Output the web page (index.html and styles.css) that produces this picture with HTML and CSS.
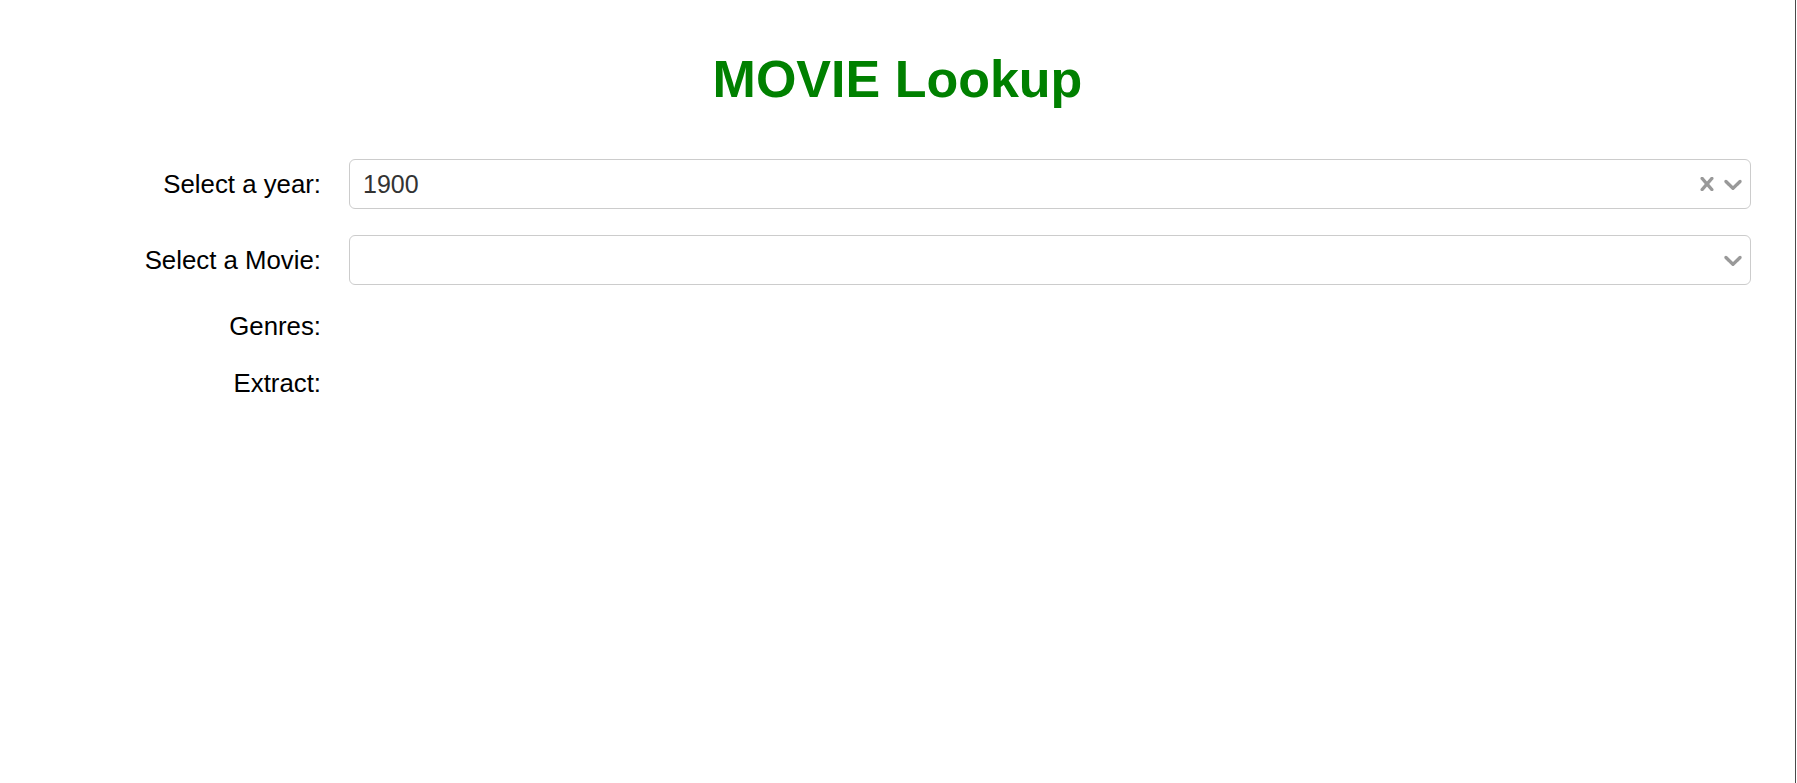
FILE: index.html
```html
<!DOCTYPE html>
<html lang="en">
<head>
<meta charset="utf-8">
<title>MOVIE Lookup</title>
<link rel="stylesheet" href="styles.css">
</head>
<body>
<div class="page">
  <h1 class="title">MOVIE Lookup</h1>
  <div class="form">
    <div class="label">Select a year:</div>
    <div class="select">
      <div class="value">1900</div>
      <div class="indicators">
        <svg class="icon-clear" viewBox="5 5 10 10" width="14" height="14" aria-hidden="true"><path d="M14.348 14.849c-0.469 0.469-1.229 0.469-1.697 0l-2.651-3.030-2.651 3.029c-0.469 0.469-1.229 0.469-1.697 0-0.469-0.469-0.469-1.229 0-1.697l2.758-3.15-2.759-3.152c-0.469-0.469-0.469-1.228 0-1.697s1.228-0.469 1.697 0l2.652 3.031 2.651-3.031c0.469-0.469 1.228-0.469 1.697 0s0.469 1.229 0 1.697l-2.758 3.152 2.758 3.15c0.469 0.469 0.469 1.229 0 1.698z"/></svg>
        <svg class="icon-chevron" viewBox="4 4 12 12" width="18" height="18" aria-hidden="true"><path d="M4.516 7.548c0.436-0.446 1.043-0.481 1.576 0l3.908 3.747 3.908-3.747c0.533-0.481 1.141-0.446 1.574 0 0.436 0.445 0.408 1.197 0 1.615-0.406 0.418-4.695 4.502-4.695 4.502-0.217 0.223-0.502 0.335-0.787 0.335s-0.57-0.112-0.789-0.335c0 0-4.287-4.084-4.695-4.502s-0.436-1.17 0-1.615z"/></svg>
      </div>
    </div>

    <div class="label">Select a Movie:</div>
    <div class="select">
      <div class="value"></div>
      <div class="indicators">
        <svg class="icon-chevron" viewBox="4 4 12 12" width="18" height="18" aria-hidden="true"><path d="M4.516 7.548c0.436-0.446 1.043-0.481 1.576 0l3.908 3.747 3.908-3.747c0.533-0.481 1.141-0.446 1.574 0 0.436 0.445 0.408 1.197 0 1.615-0.406 0.418-4.695 4.502-4.695 4.502-0.217 0.223-0.502 0.335-0.787 0.335s-0.57-0.112-0.789-0.335c0 0-4.287-4.084-4.695-4.502s-0.436-1.17 0-1.615z"/></svg>
      </div>
    </div>

    <div class="label text-row">Genres:</div>
    <div class="text-row"></div>

    <div class="label text-row">Extract:</div>
    <div class="text-row"></div>
  </div>
</div>
</body>
</html>
```

FILE: styles.css
```css
html, body {
  margin: 0;
  padding: 0;
  background: #fff;
}

body {
  font-family: "Liberation Sans", Arial, sans-serif;
  color: #000;
}

.page {
  box-sizing: border-box;
  width: 1796px;
  height: 100vh;
  padding-top: 50px;
  border-right: 1px solid #4a4a4a;
}

.title {
  margin: 0 0 50px;
  font-size: 52px;
  line-height: 59px;
  font-weight: bold;
  text-align: center;
  color: #008000;
}

.form {
  display: grid;
  grid-template-columns: 321px 1fr;
  column-gap: 28px;
  row-gap: 26px;
  align-items: center;
  padding-right: 44px;
}

.label {
  font-size: 25.8px;
  line-height: 31px;
  text-align: right;
  white-space: nowrap;
}

.text-row {
  min-height: 31px;
}

.select {
  box-sizing: border-box;
  height: 50px;
  border: 1px solid #cccccc;
  border-radius: 6px;
  background: #fff;
  display: flex;
  align-items: center;
  padding-left: 13px;
  padding-right: 8px;
}

.value {
  flex: 1;
  font-size: 25px;
  color: #333333;
}

.indicators {
  display: flex;
  align-items: center;
  gap: 10px;
  fill: #999999;
}

.icon-clear,
.icon-chevron {
  display: block;
}
```
